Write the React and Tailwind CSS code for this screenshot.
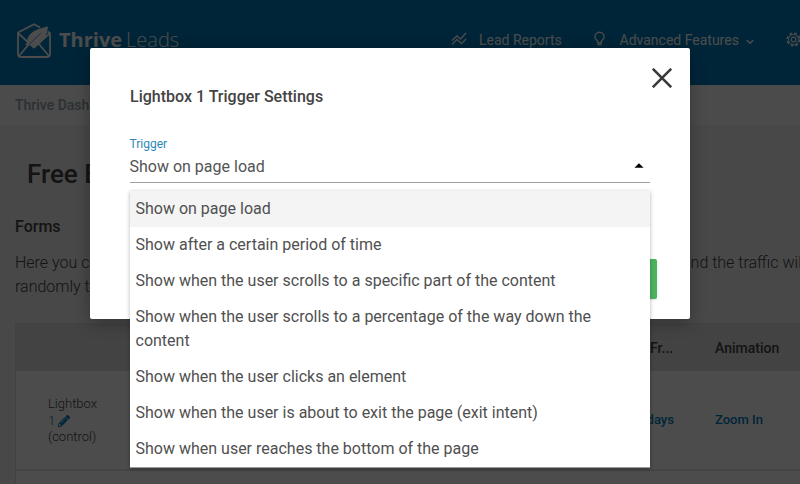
import { MdArrowDropUp } from 'react-icons/md'
import { FaPencilAlt } from 'react-icons/fa'

const OPTIONS = [
  'Show on page load',
  'Show after a certain period of time',
  'Show when the user scrolls to a specific part of the content',
  'Show when the user scrolls to a percentage of the way down the content',
  'Show when the user clicks an element',
  'Show when the user is about to exit the page (exit intent)',
  'Show when user reaches the bottom of the page',
]

// ── Icons ──────────────────────────────────────────────────
function LogoIcon() {
  return (
    <svg className="w-[35px] h-[35px] shrink-0" viewBox="0 0 35 35" fill="none" stroke="white" strokeWidth="1.8" strokeLinejoin="round">
      <path d="M23 4.500 17 1.200 1 9.500v21.500q0 3 3 3h26q3 0 3-3V10L30.500 8.500" />
      <path d="M1 10l11.500 10.500L2 33M33 10 21.500 20.500 32 33M12.500 20.500l4.500 4 4.500-4" />
      <path d="M31 3.500C22 5 10.500 9 10 19l-1.500 3 8 1C25 21 30 14 31 3.500Z" fill="white" stroke="none" />
      <path d="M12 21.500 24 10" stroke="#007dbd" strokeWidth="0.7" />
    </svg>
  )
}

function ReportsIcon() {
  return (
    <svg className="w-4 h-4" viewBox="0 0 16 16" fill="none" stroke="white" strokeWidth="1.4">
      <path d="M1 9.500 6 5l3.500 3 5.500-6" />
      <path d="M1 13.500l5-5 4.500 4 4.500-4.500" />
    </svg>
  )
}

function BulbIcon() {
  return (
    <svg className="w-[11px] h-4" viewBox="0 0 12 16" fill="none" stroke="white" strokeWidth="1.5">
      <path d="M4 12V10.500C2 8.800 1 7.500 1 5.700a5 5 0 0 1 10 0c0 1.800-1 3.100-3 4.800V12Z" />
      <path d="M3.700 13.800h4.600" strokeWidth="2" />
    </svg>
  )
}

function GearIcon() {
  return (
    <svg className="w-[15px] h-[15px] shrink-0" viewBox="0 0 15 15" fill="none" stroke="white">
      <circle cx="7.500" cy="7.500" r="6.300" strokeWidth="1.600" strokeDasharray="2.800 2.148" />
      <circle cx="7.500" cy="7.500" r="5" />
      <circle cx="7.500" cy="7.500" r="2.300" strokeWidth="1.200" />
    </svg>
  )
}

// ── Page behind the dialog ─────────────────────────────────
function Header() {
  return (
    <header className="h-[85px] bg-[#007dbd] text-white flex items-center pl-[17px] pb-[5px]">
      <LogoIcon />
      <div className="ml-[7px] w-[392px] shrink-0 font-['Open_Sans'] text-[20px] leading-7 whitespace-nowrap">
        <span className="font-bold">Thrive</span>
        <span className="ml-1 font-light">Leads</span>
      </div>
      <nav className="flex shrink-0 items-center text-sm whitespace-nowrap">
        <span className="pb-0.5"><ReportsIcon /></span>
        <span className="ml-3 w-[115px]">Lead Reports</span>
        <span className="pb-0.5"><BulbIcon /></span>
        <span className="ml-[14.5px]">Advanced Features</span>
        <svg className="w-2 h-2 ml-[7px] mt-1" viewBox="0 0 8 8" fill="none" stroke="white" strokeWidth="1.4">
          <path d="M.7 2 4 5.300 7.300 2" />
        </svg>
        <span className="ml-8 pb-0.5"><GearIcon /></span>
      </nav>
    </header>
  )
}

function FormsTable() {
  return (
    <div className="ml-[15px] mt-6 w-[785px] border-l border-[#dcdcdc] text-sm">
      <div className="h-12 bg-[#dfdfdf] pt-0.5 flex items-center font-medium whitespace-nowrap">
        <span className="w-[699px] pl-[634px]">Fr...</span>
        <span>Animation</span>
      </div>
      <div className="h-[100px] bg-white border-b-2 border-[#e6e6e6] pt-0.5 flex items-center">
        <div className="w-[610px] pl-8 text-[13px] leading-[16.5px] font-light">
          <p>Lightbox</p>
          <p className="flex items-center gap-[3px] text-[#007dbd]">1 <FaPencilAlt className="w-3 h-3" /></p>
          <p>(control)</p>
        </div>
        <div className="flex pb-0.5 text-[13px] font-medium text-[#007dbd] whitespace-nowrap">
          <span className="w-[89px] pl-[10px]">0 days</span>
          <span>Zoom In</span>
        </div>
      </div>
      <div className="h-20 bg-white" />
    </div>
  )
}

function DashboardPage() {
  return (
    <div className="w-[800px] h-[484px] overflow-hidden bg-[#f0f0f0] text-[#434343]">
      <Header />
      <div className="h-10 bg-[#fafafa] flex items-center pl-[15px] text-sm font-medium text-[#90a4ae]">
        Thrive Dash
      </div>
      <h1 className="pl-[27px] mt-[31px] text-[26px] leading-9 font-medium">Free E</h1>
      <div className="pl-[15px] mt-[23px]">
        <h2 className="text-base font-medium">Forms</h2>
        <div className="mt-3 font-light whitespace-nowrap">
          <div className="flex">
            <span className="w-[667px] shrink-0">Here you c</span>
            <span>and the traffic wil</span>
          </div>
          <p>randomly t</p>
        </div>
      </div>
      <FormsTable />
    </div>
  )
}

// ── Trigger dialog ─────────────────────────────────────────
function TriggerDialog() {
  return (
    <div className="absolute left-[90px] top-12 w-[600px] h-[271px] rounded-[2px] bg-white pl-10 pr-[33px] shadow-[0_4px_16px_rgba(0,0,0,0.3)]">
      <button className="absolute right-[18px] top-5 w-5 h-5">
        <svg viewBox="0 0 20 20" fill="none" stroke="#3a3a3a" strokeWidth="2.6">
          <path d="M.8.8l18.400 18.400M19.200.8.8 19.200" />
        </svg>
      </button>
      <h3 className="pt-[37px] text-base font-medium text-[#434343]">Lightbox 1 Trigger Settings</h3>
      <div className="mt-[27px] w-[520px]">
        <p className="-ml-[0.5px] text-xs leading-4 text-[#2a87b5]">Trigger</p>
        <div className="h-[31px] flex items-center justify-between border-b border-[#9e9e9e] text-base text-[#545454]">
          <span className="-ml-[0.5px]">Show on page load</span>
          <MdArrowDropUp className="w-[22px] h-6 mb-0.5 text-black" />
        </div>
      </div>
      <div className="mt-[76px] flex justify-end">
        <button className="h-10 w-[120px] rounded-[2px] bg-[#4bb35e] shadow" />
      </div>
      <ul className="absolute left-10 top-[143px] w-[520px] bg-white text-base leading-6 text-[#505050] shadow-[0_1px_4px_rgba(0,0,0,0.3)] border-b border-[#9a9a9a]">
        {OPTIONS.map((option, i) => (
          <li key={option} className={`px-[5.5px] py-1.5 ${i === 0 ? 'bg-[#f4f4f4]' : ''}`}>
            {option}
          </li>
        ))}
      </ul>
    </div>
  )
}

export default function App() {
  return (
    <div className="relative w-[800px] h-[484px] overflow-hidden font-[Roboto,sans-serif]">
      <DashboardPage />
      <div className="absolute inset-0 bg-black/70" />
      <TriggerDialog />
    </div>
  )
}
